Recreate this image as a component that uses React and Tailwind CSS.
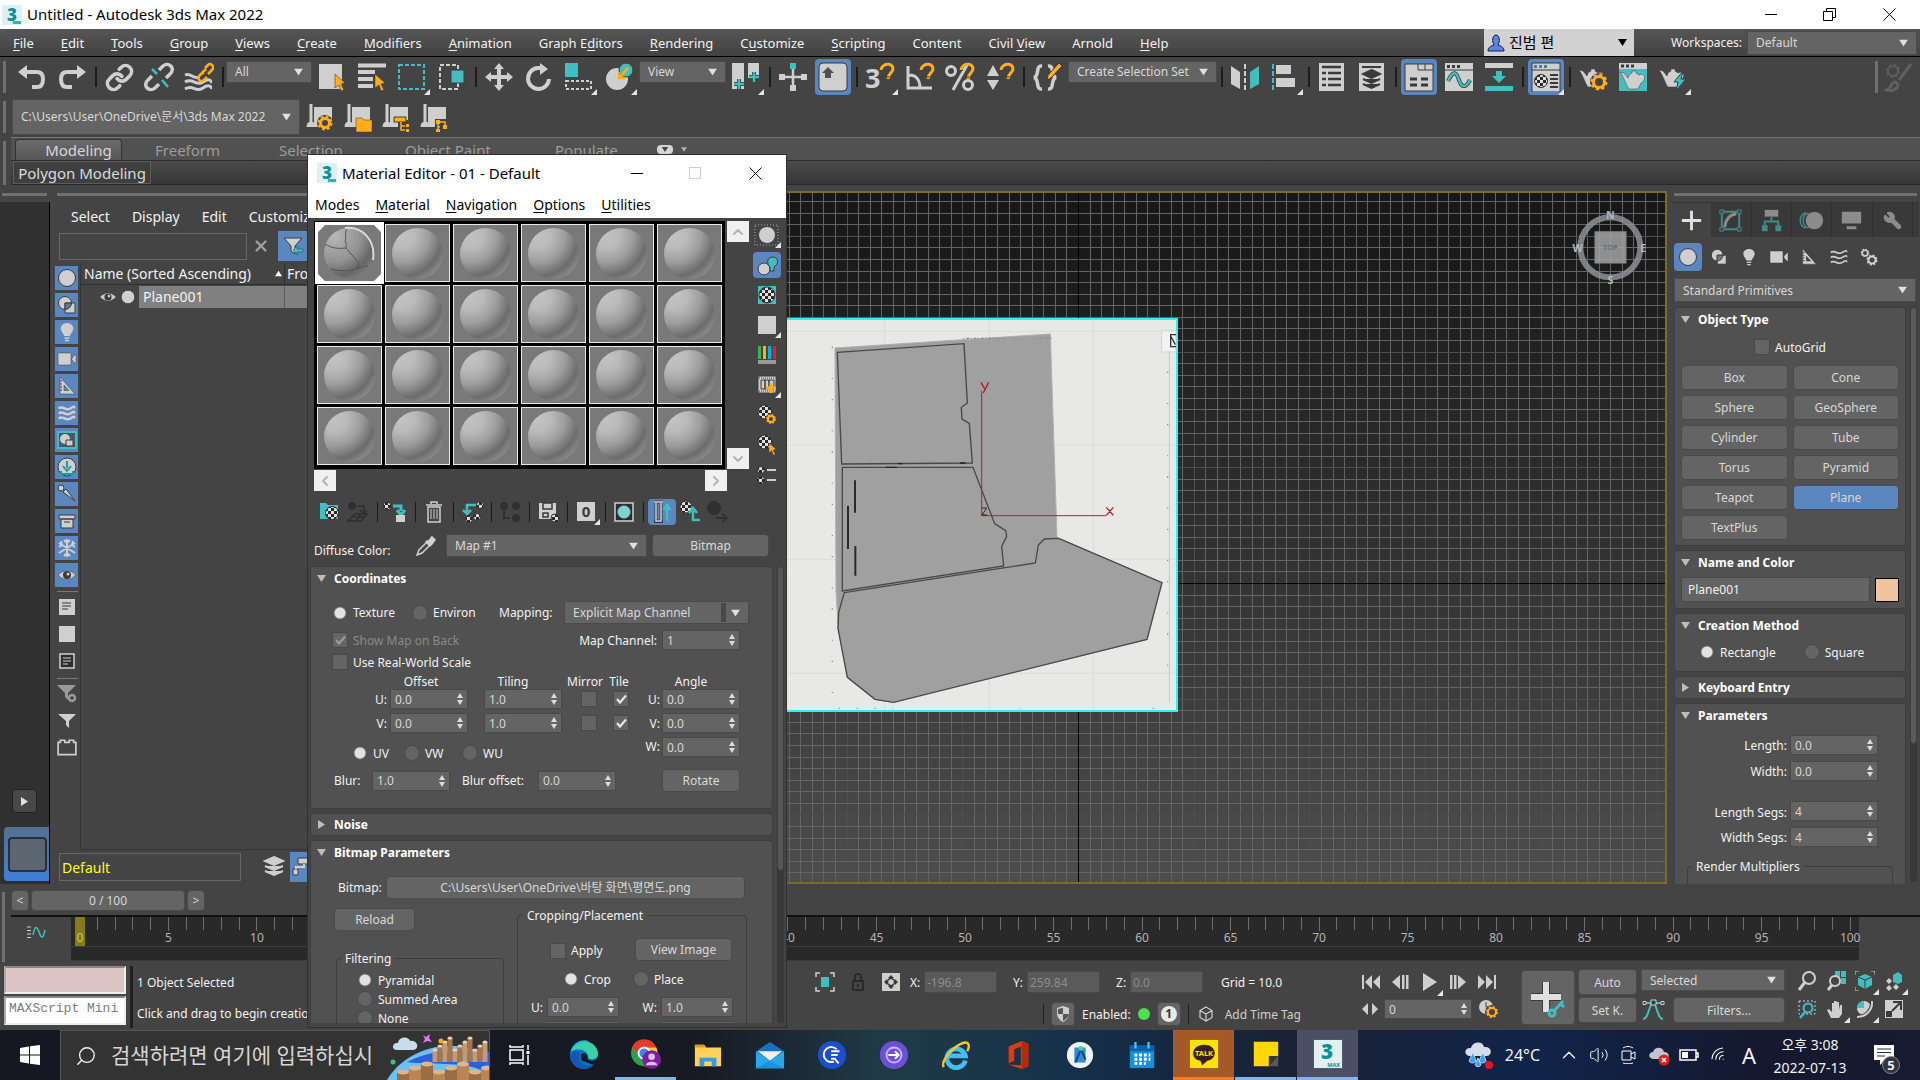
import React from "react";
import clsx from "clsx";
import { Link, ChevronUp, ChevronDown, ChevronLeft, ChevronRight, X, Wrench, Search, Volume2, Wifi } from "lucide-react";

const G = "#cfcfcf";
const T = "#41bfc0";
const A = "#ffae1a";
const D = "#3a3a3a";

// ---------- Small building blocks ----------

const Svg = ({ s = 30, vb, className = "", children }) => (
  <svg width={s} height={s} viewBox={vb || `0 0 ${s} ${s}`} className={clsx("shrink-0", className)} fill="none" aria-hidden="true">
    {children}
  </svg>
);

const Corner = () => (
  <svg width="6" height="6" viewBox="0 0 6 6" className="absolute right-0 bottom-0" aria-hidden="true">
    <path d="M6 0V6H0Z" fill="#e6e6e6" />
  </svg>
);

const Tool = ({ label, active, corner, children }) => (
  <button
    aria-label={label}
    className={clsx("relative w-9 h-9 mx-[2px] shrink-0 flex items-center justify-center rounded", active && "bg-[#5b87c0]")}
  >
    {children}
    {corner && <Corner />}
  </button>
);

const Sep = () => (
  <span className="w-[7px] shrink-0 flex justify-center">
    <span className="w-[2px] h-5 bg-[#1c1c1c]" />
  </span>
);

const Tri = ({ className = "" }) => (
  <svg width="9" height="7" viewBox="0 0 9 7" className={clsx("pointer-events-none", className)} aria-hidden="true">
    <path d="M0 0H9L4.5 7Z" fill="currentColor" />
  </svg>
);

const Select = ({ label, value, className = "", split }) => (
  <div className={clsx("relative shrink-0 bg-[#646464] border border-[#4a4a4a] text-[#d8d8d8]", className)}>
    <select aria-label={label} className="appearance-none block w-full h-full pl-2 pr-5 outline-none bg-transparent">
      <option>{value}</option>
    </select>
    {split && <span className="absolute right-[22px] top-px bottom-px w-[5px] bg-[#484848]" />}
    <Tri className="absolute right-2 top-1/2 -translate-y-1/2 text-[#e0e0e0]" />
  </div>
);

const Spin = ({ label, value, className = "w-[78px]", dim }) => (
  <div className={clsx("relative shrink-0 h-5 bg-[#646464] border border-[#494949]", className)}>
    <input aria-label={label} defaultValue={value} className={clsx("block w-full h-full px-1 bg-transparent outline-none text-[12px]", dim ? "text-[#8f8f8f]" : "text-[#d5d5d5]")} />
    <svg width="6" height="12" viewBox="0 0 6 12" className="absolute right-1 top-[3px]" aria-hidden="true">
      <path d="M3 0L6 5H0ZM3 12L6 7H0Z" fill="#dcdcdc" />
    </svg>
  </div>
);

const Radio = ({ name, children, checked, className = "" }) => (
  <label className={clsx("flex items-center gap-[5px] whitespace-nowrap", className)}>
    <input
      type="radio"
      name={name}
      defaultChecked={checked}
      className="appearance-none w-4 h-4 rounded-full bg-[#646464] border border-[#494949] checked:bg-[radial-gradient(circle,#e2e2e2_5px,#646464_6px)]"
    />
    {children}
  </label>
);

const Check = ({ children, label, checked, disabled, className = "" }) => (
  <label className={clsx("flex items-center gap-[5px] whitespace-nowrap", disabled && "text-[#8a8a8a]", className)}>
    <span className="relative block w-4 h-4">
      <input type="checkbox" aria-label={label} defaultChecked={checked} disabled={disabled} className="peer block appearance-none w-4 h-4 bg-[#646464] border border-[#494949]" />
      <svg width="16" height="16" viewBox="0 0 16 16" className="absolute inset-0 hidden peer-checked:block pointer-events-none" fill="none" aria-hidden="true">
        <path d="M4 8L7 11.500L13 4.500" stroke={disabled ? "#9a9a9a" : "#e4e4e4"} strokeWidth="2.200" />
      </svg>
    </span>
    {children}
  </label>
);

const Btn = ({ children, active, className = "" }) => (
  <button className={clsx("rounded border border-[#4a4a4a] text-[#d8d8d8] whitespace-nowrap", active ? "bg-[#5b87c0]" : "bg-[#646464]", className)}>
    {children}
  </button>
);

const Rollout = ({ title, closed, className = "", children }) => (
  <section className={clsx("rounded border border-[#3e3e3e] bg-[#515151] shrink-0", className)}>
    <h3 className={clsx("pl-[6px] pr-2 flex items-center font-bold text-white", closed ? "h-[21px]" : "h-[22px]")}>
      <svg width="9" height="9" viewBox="0 0 9 9" className="mr-2" aria-hidden="true">
        <path d={closed ? "M1 0V9L8 4.5Z" : "M0 1H9L4.5 8Z"} fill="#bdbdbd" />
      </svg>
      <span className="flex-1">{title}</span>
      <span className="w-2 h-2 bg-[radial-gradient(#9a9a9a_40%,transparent_50%)] bg-[length:2px_2px]" />
    </h3>
    {children}
  </section>
);

const Mnemonic = ({ text, at }) =>
  at < 0 ? (
    text
  ) : (
    <>
      {text.slice(0, at)}
      <span className="underline underline-offset-2">{text[at]}</span>
      {text.slice(at + 1)}
    </>
  );

const Logo = () => (
  <span className="relative w-5 h-5 shrink-0 flex items-center justify-center bg-[#dff0f0] text-[#0d9199] text-[17px] leading-5 font-black">
    3<span className="absolute right-px bottom-px w-2 h-[3px] bg-[#2fb3b3]" />
  </span>
);

const DotsH = ({ className = "" }) => (
  <span className={clsx("block h-[3px] bg-[radial-gradient(#9c9c9c_45%,transparent_55%)] bg-[length:2px_2px]", className)} />
);

const DotsV = ({ className = "" }) => (
  <span className={clsx("block w-[3px] bg-[radial-gradient(#9c9c9c_45%,transparent_55%)] bg-[length:2px_2px]", className)} />
);

// ---------- Shared icon drawings ----------

const Magnet = ({ x = 0 }) => (
  <g transform={`translate(${x} 0)`}>
    <path d="M14 8C15 1 26 0 26 7C26 11 21 11 21 17" stroke={A} strokeWidth="3" />
    <path d="M13 8.500H16M19.500 15H22.500" stroke={D} />
  </g>
);

const Teapot = () => (
  <path d="M1 8L5 9L9 14L10 11C11 10 13 9 13 9V7H17V9L20 11C24 9 27 12 25 16C24 18 23 19 22 19L19 25H10C7 21 6 15 1 8Z" fill={G} stroke={D} strokeWidth=".5" />
);

const Gear = ({ cx, cy, r = 6, w = 3, color = A }) => (
  <g>
    <circle cx={cx} cy={cy} r={r} stroke={color} strokeWidth={w} strokeDasharray={`${r * 0.42} ${r * 0.365}`} />
    <circle cx={cx} cy={cy} r={r - w / 2} stroke={color} strokeWidth={w} />
  </g>
);

const Wand = ({ x = 0, y = 0 }) => (
  <path transform={`translate(${x} ${y})`} d="M0 0L10 9L6 10L9 16L6 17L4 11L0 14Z" fill={A} stroke={D} strokeWidth=".6" />
);

const Waves = ({ color = G, w = 2.5 }) => (
  <path d="M2 5C8 1 10 9 16 5S20 4 22 4M2 11C8 7 10 15 16 11S20 10 22 10M2 17C8 13 10 21 16 17S20 16 22 16" stroke={color} strokeWidth={w} />
);

const Chk = ({ cx, cy, r }) => <circle cx={cx} cy={cy} r={r} fill="url(#chk)" stroke="#333" />;

const Eye = ({ s = 20 }) => (
  <Svg s={s} vb="0 0 20 20">
    <path d="M1 10Q10 1 19 10Q10 19 1 10Z" fill={G} stroke={D} strokeWidth=".5" />
    <circle cx="10" cy="10" r="4" fill={D} />
    <circle cx="11" cy="9" r="1.500" fill={G} />
  </Svg>
);

const Bulb = ({ s = 20 }) => (
  <Svg s={s} vb="0 0 20 20">
    <path d="M10 1C5 1 3 5 4 8C5 11 7 12 7 14H13C13 12 15 11 16 8C17 5 15 1 10 1Z" fill={G} />
    <path d="M7.500 16H12.500M8 18.500H12" stroke={G} strokeWidth="1.500" />
  </Svg>
);

const Cam = ({ s = 20 }) => (
  <Svg s={s} vb="0 0 20 20">
    <path d="M1 4H14V16H1ZM15 9L19 5V15L15 11Z" fill={G} stroke={D} strokeWidth=".5" />
  </Svg>
);

const Helper = ({ s = 20 }) => (
  <Svg s={s} vb="0 0 20 20">
    <path d="M3 1L18 18H3ZM7 9V14.500H12Z" fill={G} fillRule="evenodd" stroke={D} strokeWidth=".5" />
    <path d="M3 5H5M3 8H5M3 11H5M3 14H5" stroke={D} />
  </Svg>
);

const Shapes = ({ s = 20 }) => (
  <Svg s={s} vb="0 0 20 20">
    <circle cx="8" cy="8" r="6.500" fill={G} stroke={D} />
    <path d="M8 8H18V18H8Z" fill={G} stroke={D} />
    <path d="M8 14.500V8H14.500A6.500 6.500 0 0 1 8 14.500Z" fill="#6b7684" stroke={D} />
  </Svg>
);

const Ball = ({ s = 20 }) => (
  <Svg s={s} vb="0 0 20 20">
    <circle cx="10" cy="10" r="8.500" fill={G} stroke={D} />
  </Svg>
);

// ---------- Title, menus and toolbars ----------

const MENUS = [
  ["File", 0], ["Edit", 0], ["Tools", 0], ["Group", 0], ["Views", 0], ["Create", 0], ["Modifiers", 0], ["Animation", 0],
  ["Graph Editors", 7], ["Rendering", 0], ["Customize", 1], ["Scripting", 0], ["Content", -1], ["Civil View", 6], ["Arnold", -1], ["Help", 0],
];

const TitleBar = () => (
  <header className="h-[29px] shrink-0 bg-white text-black flex items-center pl-[2px]">
    <Logo />
    <h1 className="ml-[5px] flex-1 text-[15px]">Untitled - Autodesk 3ds Max 2022</h1>
    <button aria-label="Minimize" className="w-[58px] flex justify-center"><span className="w-3 h-px bg-black" /></button>
    <button aria-label="Restore" className="w-[58px] flex justify-center">
      <Svg s={13}><path d="M.5 3.500H9.500V12.500H.5ZM3.500 3V.5H12.500V9.500H10" stroke="#000" /></Svg>
    </button>
    <button aria-label="Close" className="w-[62px] flex justify-center">
      <Svg s={13}><path d="M.5 .5L12.500 12.500M12.500 .5L.5 12.500" stroke="#000" /></Svg>
    </button>
  </header>
);

const MenuBar = () => (
  <nav className="h-7 shrink-0 flex items-center border-b border-black bg-linear-to-b from-[#565656] to-[#424242]">
    <div className="flex-1 flex gap-[27px] pl-[13px] text-[13px] leading-5">
      {MENUS.map(([text, at]) => (
        <button key={text} className="whitespace-nowrap"><Mnemonic text={text} at={at} /></button>
      ))}
    </div>
    <button className="w-[150px] h-full bg-[#d2d2d2] text-black flex items-center px-[3px] text-[15px]">
      <Svg s={18}>
        <path d="M9 1C5 1 5 8 7 11C3 12 1 14 1 17H17C17 14 15 12 11 11C13 8 13 1 9 1Z" fill="#5b82e0" stroke="#16204a" />
      </Svg>
      <span className="ml-1 flex-1 text-left">진범 편</span>
      <Tri className="mr-1" />
    </button>
    <span className="w-[108px] text-right text-[12px]">Workspaces:</span>
    <Select label="Workspaces" value="Default" className="ml-[5px] mr-[3px] w-[170px] h-6 text-[12px]" />
  </nav>
);

const MainToolbar = () => (
  <div className="h-10 shrink-0 flex items-center pl-[3px]">
    <DotsV className="h-8 mr-[6px]" />
    <Tool label="Undo"><Svg><path d="M10 3V17L1 10Z" fill={G} /><path d="M9 10H20Q26 10 26 17Q26 25 20 25H15" stroke={G} strokeWidth="4" /></Svg></Tool>
    <Tool label="Redo"><Svg><path d="M20 3V17L29 10Z" fill={G} /><path d="M21 10H10Q4 10 4 17Q4 25 10 25H15" stroke={G} strokeWidth="4" /></Svg></Tool>
    <Sep />
    <Tool label="Link"><Link size={29} strokeWidth={3} color={G} /></Tool>
    <Tool label="Unlink">
      <Svg>
        <path d="M15 8L19 4C25 -1 32 7 26 12L22 16M15 22L11 26C5 31 -2 23 4 18L8 14" stroke={G} strokeWidth="3.500" />
        <path d="M8 7L13 12M18 18L24 25" stroke={T} strokeWidth="2.500" />
      </Svg>
    </Tool>
    <Tool label="Bind to space warp">
      <Svg>
        <path d="M1 13C7 10 9 18 15 15M1 20C9 15 12 25 19 20S27 20 28 20M1 27C9 22 12 31 19 26S27 26 28 26" stroke={G} strokeWidth="3" />
        <path d="M21 6L24 3C27 0 31 5 28 8L24 12M22 7L17 12M20 10L16 13C12 17 17 21 20 18L23 15" stroke={A} strokeWidth="2.500" />
      </Svg>
    </Tool>
    <Sep />
    <Select label="Selection filter" value="All" className="w-[86px] h-[22px] self-start mt-1 text-[12px] leading-5" />
    <Tool label="Select object"><Svg><path d="M2 2H25V27H2Z" fill={G} /><Wand x={18} y={12} /></Svg></Tool>
    <Tool label="Select by name"><Svg><path d="M1 3.500H29M1 10H18M1 17H16M1 24H16" stroke={G} strokeWidth="4" /><Wand x={18} y={12} /></Svg></Tool>
    <Tool label="Selection region" corner><Svg><path d="M2 3H27V27H2Z" stroke={T} strokeWidth="2" strokeDasharray="4 2" /></Svg></Tool>
    <Tool label="Window crossing"><Svg><path d="M3 3H21V27H3Z" stroke={G} strokeWidth="2" strokeDasharray="4 2" /><path d="M14 8H27V21H14Z" fill={T} stroke={D} /></Svg></Tool>
    <Sep />
    <Tool label="Move">
      <Svg><path d="M15 1L20 7H17V13H23V10L29 15L23 20V17H17V23H20L15 29L10 23H13V17H7V20L1 15L7 10V13H13V7H10Z" fill={G} /></Svg>
    </Tool>
    <Tool label="Rotate"><Svg><path d="M18 6H14A10.500 10.500 0 1 0 25 17" stroke={G} strokeWidth="4" /><path d="M16 1V13L24 7Z" fill={G} /></Svg></Tool>
    <Tool label="Scale" corner><Svg><path d="M1 1H14V15H1Z" fill={T} /><path d="M2 19H27V27H2Z" stroke={G} strokeWidth="2" strokeDasharray="3 2" /></Svg></Tool>
    <Tool label="Place" corner>
      <Svg><circle cx="13" cy="17" r="11" fill={G} /><circle cx="22" cy="8" r="7" fill={T} stroke={D} /><path d="M24 6L16 15M15 10V16H21" stroke={A} strokeWidth="2.500" /></Svg>
    </Tool>
    <Select label="Reference coordinate system" value="View" className="w-[87px] h-[22px] self-start mt-1 text-[12px] leading-5" />
    <Tool label="Pivot center" corner>
      <Svg><path d="M1 1H13V27H1ZM17 1H28V16H17Z" fill={G} /><path d="M8 17V27M3 22H13M23 10V20M18 15H28" stroke={D} strokeWidth="4" /><path d="M8 17V27M3 22H13M23 10V20M18 15H28" stroke={T} strokeWidth="2.500" /></Svg>
    </Tool>
    <Sep />
    <Tool label="Manipulate"><Svg><path d="M15 4V26M4 15H26" stroke={G} strokeWidth="2.500" /><path d="M1 12H7V18H1ZM23 12H29V18H23ZM12 23H18V29H12Z" fill={G} /><path d="M12 1H18V7H12Z" fill={T} /></Svg></Tool>
    <Tool label="Keyboard override" active><Svg><rect x="1" y="1" width="28" height="28" rx="4" fill={G} stroke={D} /><path d="M10 5L16 11H13V16H7V11H4Z" fill="#505050" /></Svg></Tool>
    <Sep />
    <Tool label="Snaps toggle" corner><Svg><text x="0" y="26" fontSize="27" fontWeight="700" fill={G}>3</text><Magnet x={2} /></Svg></Tool>
    <Tool label="Angle snap"><Svg><path d="M3 4V26H27M4 13C12 13 15 19 15 26" stroke={G} strokeWidth="3" /><Magnet x={2} /></Svg></Tool>
    <Tool label="Percent snap"><Svg><path d="M22 3L8 28" stroke={G} strokeWidth="3" /><circle cx="6" cy="9" r="4.500" stroke={G} strokeWidth="3" /><circle cx="23" cy="23" r="4.500" stroke={G} strokeWidth="3" /><Magnet x={2} /></Svg></Tool>
    <Tool label="Spinner snap"><Svg><path d="M8 3L14 14H2ZM8 28L14 18H2Z" fill={G} /><Magnet x={2} /></Svg></Tool>
    <Sep />
    <Tool label="Edit named selection sets"><Svg><path d="M10 4C3 3 8 14 2 15.500C8 17 3 28 10 27M16 4C23 3 18 14 24 15.500C18 17 23 28 16 27" stroke={G} strokeWidth="3.500" /><path d="M27 1L30 4L19 16L15 18L16 13Z" fill={A} stroke={D} /></Svg></Tool>
    <Select label="Named selection sets" value="Create Selection Set" className="mx-px w-[149px] h-[22px] self-start mt-1 text-[12px] leading-5" />
    <Sep />
    <Tool label="Mirror"><Svg><path d="M1 4L10 10V27L1 22Z" fill={G} /><path d="M29 4L20 10V27L29 22Z" fill={T} /><path d="M15 2V30" stroke={G} strokeWidth="2" strokeDasharray="5 2" /></Svg></Tool>
    <Tool label="Align" corner><Svg><path d="M3 2V29" stroke={T} strokeWidth="2" strokeDasharray="5 2" /><path d="M6 3H21V12H6ZM6 16H25V25H6Z" fill={G} /></Svg></Tool>
    <Sep />
    <Tool label="Scene explorer"><Svg><path d="M2 1H27V29H2Z" fill={G} /><path d="M5 5H24M5 11H9M11 11H24M5 17H9M11 17H24M5 23H9M11 23H24" stroke={D} strokeWidth="2.500" /></Svg></Tool>
    <Tool label="Layer explorer"><Svg><path d="M2 1H27V29H2Z" fill={G} /><path d="M5 5H24" stroke={D} strokeWidth="2" /><path d="M14.500 8L23 12L14.500 16L6 12ZM6 17L14.500 21L23 17M6 22L14.500 26L23 22" fill={D} stroke={D} strokeWidth="2" /></Svg></Tool>
    <Sep />
    <Tool label="Toggle ribbon" active><Svg><path d="M1 2H29V29H1Z" fill={G} stroke={D} /><path d="M14 2V8H29M21 2V8" stroke={D} /><path d="M6 17H13M17 17H24M6 23H13M17 23H24" stroke={D} strokeWidth="3" /></Svg></Tool>
    <Tool label="Curve editor"><Svg><path d="M1 1H29V29H1Z" fill={G} /><path d="M1 8H29" stroke={D} /><path d="M3 4.500H6M8 4.500H11M13 4.500H16" stroke={D} strokeWidth="3" /><path d="M4 19C10 6 13 12 15 18S21 28 26 18" stroke={D} strokeWidth="4" /><path d="M4 19C10 6 13 12 15 18S21 28 26 18" stroke={T} strokeWidth="2.500" /></Svg></Tool>
    <Tool label="Schematic view"><Svg><path d="M1 1H29V6H1Z" fill={G} /><path d="M1 24H29V29H1Z" fill={T} /><path d="M12 9H18V14H22L15 21L8 14H12Z" fill={T} /></Svg></Tool>
    <Sep />
    <Tool label="Material editor" active corner>
      <Svg><path d="M1 1H29V30H1Z" fill={G} stroke={D} /><path d="M1 8H29" stroke={D} /><path d="M3 4.500H6M8 4.500H11M13 4.500H16" stroke="#4a78b8" strokeWidth="3" /><Chk cx={10} cy={19} r={6.5} /><path d="M19 13H27M19 17H27M19 21H27M19 25H27" stroke={D} strokeWidth="2" /></Svg>
    </Tool>
    <Sep />
    <Tool label="Render setup"><Svg><Teapot /><circle cx="21" cy="20" r="9" fill="#444" /><Gear cx={21} cy={20} r={7} /></Svg></Tool>
    <Tool label="Rendered frame"><Svg><path d="M1 1H29V29H1Z" fill={T} /><path d="M1 1H29V7H1Z" fill={G} /><path d="M3 4H6M8 4H11M13 4H16" stroke={D} strokeWidth="3" /><g transform="translate(1 2)"><Teapot /></g></Svg></Tool>
    <Tool label="Render" corner><Svg><Teapot /><path d="M25 9L16 20H20L18 29L28 17H23Z" fill={T} stroke={D} /></Svg></Tool>
    <div className="flex-1" />
    <DotsV className="h-8 mr-[6px]" />
    <Svg className="mr-[6px]"><Gear cx={9} cy={9} r={6} w={2} color="#5c5c5c" /><path d="M27 2L15 18M11 20C7 20 8 26 3 28C10 30 14 26 14 22Z" stroke="#606060" strokeWidth="3" /></Svg>
  </div>
);

const Scroll = ({ children }) => (
  <Svg>
    <path d="M5 2V25M2 25C2 20 8 20 8 25" stroke={G} strokeWidth="3" />
    <path d="M8 5H26V25H8Z" fill={G} />
    {children}
  </Svg>
);

const ProjectBar = () => (
  <div className="h-10 shrink-0 flex items-center pl-[3px]">
    <DotsV className="h-8 mr-[6px]" />
    <Select label="Project folder" value="C:\Users\User\OneDrive\문서\3ds Max 2022" className="w-[288px] h-9 mr-[2px] text-[12px]" />
    <button aria-label="Project settings" className="w-[38px] flex justify-center"><Scroll><circle cx="19" cy="21" r="8" fill="#444" /><Gear cx={19} cy={21} r={6} /></Scroll></button>
    <button aria-label="Project folder" className="w-[38px] flex justify-center"><Scroll><path d="M12 16H18L20 18H28V30H12Z" fill={A} stroke={D} strokeWidth=".5" /></Scroll></button>
    <button aria-label="Project hierarchy" className="w-[38px] flex justify-center"><Scroll><path d="M16 18H28V30H16Z" fill="#444" /><path d="M12 15H24V20H12Z" fill={A} stroke={D} /><path d="M19 20V28H23M19 24H23" stroke={A} strokeWidth="1.500" /><path d="M24 22H27V25H24ZM24 27H27V30H24Z" fill={A} /></Scroll></button>
    <button aria-label="Project structure" className="w-[38px] flex justify-center"><Scroll><path d="M15 17H28V30H15Z" fill="#444" /><path d="M18 30V20H25V24M18 25H20" stroke={A} strokeWidth="1.500" /><path d="M16 18H20V22H16ZM23 23H27V27H23ZM16 27H20V30H16Z" fill={A} /></Scroll></button>
  </div>
);

const Ribbon = () => (
  <div className="shrink-0 flex pl-[3px]">
    <DotsV className="mt-1 h-11 mr-[5px]" />
    <div className="flex-1 border-t border-[#747474]">
      <div className="h-[23px] flex items-end bg-[#515151] border-b border-[#2c2c2c] text-[15px] leading-5 text-[#9c9c9c]">
        <button className="ml-1 mr-[33px] w-[107px] pl-5 rounded-t bg-linear-to-b from-[#6c6c6c] to-[#565656] border border-b-0 border-[#333] text-[#d6d6d6]">Modeling</button>
        <button className="w-[124px] text-left">Freeform</button>
        <button className="w-[126px] text-left">Selection</button>
        <button className="w-[150px] text-left">Object Paint</button>
        <button className="w-[102px] text-left">Populate</button>
        <button aria-label="Ribbon display" className="self-center w-4 h-[9px] rounded-sm bg-[#d6d6d6] flex items-center justify-center text-[#444]"><Tri className="w-2 h-[5px]" /></button>
        <Tri className="self-center ml-2 w-[6px] text-[#b0b0b0]" />
      </div>
      <div className="h-6 flex bg-linear-to-b from-[#4a4a4a] to-[#363636] border-b border-[#2a2a2a]">
        <button className="ml-[2px] w-[138px] border border-[#5c5c5c] bg-[#3f3f3f] text-[15px] leading-5 text-[#dadada]">Polygon Modeling</button>
      </div>
    </div>
  </div>
);

// ---------- Scene explorer ----------

const FILTERS = [
  ["Geometry", <Ball />],
  ["Shapes", <Shapes />],
  ["Lights", <Bulb />],
  ["Cameras", <Cam />],
  ["Helpers", <Helper />],
  ["Space warps", <Svg s={20} vb="0 0 24 21"><Waves w={3} /></Svg>],
  ["Groups", <Svg s={20}><path d="M1 2H19V18H1Z" fill="#4a5a6e" stroke={T} strokeWidth="2" /><circle cx="8" cy="9" r="5" fill={G} /><path d="M9 10H16V16H9Z" fill={G} stroke={D} /></Svg>],
  ["Xrefs", <Svg s={20}><circle cx="10" cy="10" r="9" fill={G} stroke={D} /><path d="M10 4V11M6 9L10 14L14 9M4 14V17H16V14" stroke="#1f9c9c" strokeWidth="2" /></Svg>],
  ["Bones", <Svg s={20}><circle cx="4" cy="4" r="3" fill={G} stroke={D} /><path d="M6 8L9 5L18 17Z" fill={G} stroke={D} /></Svg>],
  ["Containers", <Svg s={20}><path d="M2 4H18V8H2ZM4 8H16V17H4Z" fill={G} stroke={D} /><path d="M7 11H13" stroke={D} /></Svg>],
  ["Frozen", <Svg s={20}><path d="M10 1V19M2 5L18 15M18 5L2 15M7 2L10 5L13 2M7 18L10 15L13 18M2 9L5 7L4 3M18 9L15 7L16 3" stroke={G} strokeWidth="2" /></Svg>],
  ["Hidden", <Eye />],
];

const SceneExplorer = () => (
  <aside className="w-[258px] shrink-0 flex flex-col overflow-hidden">
    <DotsH className="ml-[7px] mt-[2px]" />
    <div className="flex pl-[21px] mt-[11px] h-5 gap-[22px] text-[14px] leading-5">
      {["Select", "Display", "Edit", "Customize"].map((m) => (
        <button key={m}>{m}</button>
      ))}
    </div>
    <div className="flex items-center pl-[9px] mt-1 h-[30px] shrink-0">
      <input aria-label="Find" className="w-[188px] h-[27px] bg-transparent border border-[#666] outline-none px-1" />
      <X size={18} strokeWidth={3} className="ml-[5px] mr-2 text-[#a0a0a0]" />
      <button aria-label="Filter" className="w-[30px] h-[30px] shrink-0 bg-[#5b87c0] flex items-center justify-center">
        <Svg s={22}><path d="M2 3H20L13 11V19L9 16V11Z" fill={G} stroke={D} /><path d="M11 15L15 11V14H21V17H15V20Z" fill={T} stroke={D} strokeWidth=".5" /></Svg>
      </button>
    </div>
    <div className="flex flex-1 min-h-0 mt-[2px]">
      <div className="w-[25px] ml-[5px] flex flex-col gap-[3px] pt-[3px] shrink-0">
        {FILTERS.map(([name, icon]) => (
          <button key={name} aria-label={name} className="w-[23px] h-6 bg-[#5b87c0] flex items-center justify-center">{icon}</button>
        ))}
        <span className="mx-[2px] mt-px h-px bg-[#7a7a7a]" />
        <button aria-label="All" className="w-[23px] h-6 flex items-center justify-center"><Svg s={16}><path d="M0 0H16V16H0Z" fill={G} /><path d="M3 4H12M3 7H12M3 10H9" stroke={D} /></Svg></button>
        <button aria-label="None" className="w-[23px] h-6 flex items-center justify-center"><Svg s={16}><path d="M0 0H16V16H0Z" fill={G} /></Svg></button>
        <button aria-label="Invert" className="w-[23px] h-6 flex items-center justify-center"><Svg s={16}><path d="M1 1H15V15H1Z" fill="#2e2e2e" stroke={G} strokeWidth="1.500" /><path d="M4 5H12M4 8H12M4 11H9" stroke={G} /></Svg></button>
        <span className="mx-[2px] mt-[2px] h-px bg-[#7a7a7a]" />
        <button aria-label="Filter settings" className="w-[23px] h-6 flex items-center justify-center"><Svg s={20}><path d="M0 1H19L11 9V16L8 13V9Z" fill="#999" /><circle cx="15" cy="14" r="3" fill="#444" stroke="#999" strokeWidth="2.500" /></Svg></button>
        <button aria-label="Filters" className="w-[23px] h-6 flex items-center justify-center"><Svg s={18}><path d="M0 2H18L11 9V16L8 13V9Z" fill={G} /></Svg></button>
        <button aria-label="Containers" className="w-[23px] h-6 flex items-center justify-center"><Svg s={20} vb="0 0 18 18"><path d="M1 4H3V2H7V4H11V2H15V4H17V15H1Z" stroke={G} strokeWidth="1.500" /></Svg></button>
      </div>
      <table className="flex-1 self-stretch block border-l border-b border-[#353535] overflow-hidden text-[14px]">
        <thead className="block">
          <tr className="flex h-[22px] border-b border-[#2f2f2f] leading-[22px] whitespace-nowrap">
            <th className="w-[204px] shrink-0 pl-[3px] font-normal text-left flex items-center border-r border-[#2f2f2f]">
              <span className="flex-1">Name (Sorted Ascending)</span>
              <Tri className="rotate-180 mr-[2px] text-white w-[7px]" />
            </th>
            <th className="pl-[2px] font-normal">Frozen</th>
          </tr>
        </thead>
        <tbody className="block">
          <tr className="flex h-6 leading-[22px]">
            <td className="w-[58px] shrink-0 flex items-center pl-[18px] gap-[3px]"><Eye s={18} /><Ball s={16} /></td>
            <td className="w-[146px] shrink-0 bg-[#808080] border-r border-[#5c5c5c] pl-1 h-[22px] mt-px">Plane001</td>
            <td className="w-8 bg-[#808080] h-[22px] mt-px" />
          </tr>
        </tbody>
      </table>
    </div>
    <div className="h-[34px] shrink-0 flex items-center pl-[9px]">
      <input aria-label="Layer" defaultValue="Default" className="w-[182px] h-7 px-[2px] bg-transparent border border-[#666] text-[14px] text-[#ffff14] outline-none" />
      <Tri className="ml-1 w-[6px] text-black" />
      <span className="w-px h-7 ml-[8px] mr-1 bg-[#808080]" />
      <Svg s={28} className="ml-[3px]" vb="0 0 28 28"><path d="M14 4L23 8L14 12L5 8ZM5 13L14 17L23 13M5 18L14 22L23 18" fill={G} stroke={G} strokeWidth="2" /></Svg>
      <button aria-label="Hierarchy" className="ml-[2px] w-[30px] h-[30px] shrink-0 bg-[#5b87c0] flex items-center"><Svg s={24}><path d="M8 3H20V9H8ZM3 14H8V20H3Z" fill={G} stroke={D} /><path d="M14 9V12H6V14" stroke={G} strokeWidth="2" /></Svg></button>
    </div>
  </aside>
);

// ---------- Viewport ----------

const STEP = 11.57;
const range = (from, to) => Array.from({ length: to - from + 1 }, (_, i) => from + i);

const Viewport = () => (
  <main className="relative flex-1 min-w-0 border-2 border-l-0 border-[#7d6a26] bg-linear-to-b from-[#161616] to-[#4d4d4d]">
    <svg className="absolute inset-0 w-full h-full" viewBox="308 193 1357 689" preserveAspectRatio="xMaxYMid slice" fill="none" role="img" aria-label="Top view">
      <g shapeRendering="crispEdges">
        {range(-66, 50).map((i) => (
          <path key={`v${i}`} d={`M${1078.5 + i * STEP} 193V882`} stroke={i % 10 === 0 ? "#4e4e4e" : "#646464"} />
        ))}
        {range(-33, 25).map((i) => (
          <path key={`h${i}`} d={`M308 ${583.5 + i * STEP}H1665`} stroke={i % 10 === 0 ? "#4e4e4e" : "#646464"} />
        ))}
        <path d="M1078.5 193V882M308 583.5H1665" stroke="#000" />
      </g>
      {/* textured plane */}
      <g transform="translate(780 300) scale(.33333)">
        <path d="M18 57H1191V1233H18Z" fill="#e8e8e6" stroke="#25f5f5" strokeWidth="6" />
        <path d="M314 60V1230M628 60V1230M940 60V1230M20 94H1188M20 436H1188M20 778H1188M20 1120H1188" stroke="#dcdcdc" strokeWidth="3" />
        <path d="M1168 150V1208" stroke="#c9c9c9" strokeWidth="3" />
        <path d="M165 144L811 102L831 712L1146 848L1101 1018L341 1207L285 1198L202 1132L174 985L168 870Z" fill="#a0a0a0" stroke="#b0b0b0" strokeWidth="3" />
        <path
          d="M172 157L552 131L562 309L544 322L546 357L568 370L577 489L185 492ZM187 502H579L644 671L677 692L680 709L665 739L671 798L187 873ZM193 878L766 789L775 735L793 717L836 715L1146 848L1101 1018L341 1207L285 1198L202 1132L174 985L176 937Z"
          stroke="#484848" strokeWidth="4"
        />
        <path d="M225 541V638M204 617V747M226 738V827" stroke="#2a2a2a" strokeWidth="6" />
        <path d="M318 502H350M354 491H368M540 489H556" stroke="#222" strokeWidth="4" />
        <path d="M157 140V1205M1163 215V1120" stroke="#8c8c8c" strokeWidth="4" strokeDasharray="4 90 3 60" />
        <path d="M550 115H680M768 115H818" stroke="#8c8c8c" strokeWidth="4" strokeDasharray="3 6 8 5" />
        <path d="M176 1225H340M720 1225H722M1118 1225H1128" stroke="#9c9c9c" strokeWidth="4" strokeDasharray="4 50" />
        <path d="M1145 92H1188V156H1145Z" fill="#f2f2f2" stroke="#d2d2d2" strokeWidth="3" />
        <path d="M1188 104H1172V140H1188M1172 108L1186 134" stroke="#333" strokeWidth="4" />
        <path d="M605 272V647H978" stroke="#c81c1c" strokeWidth="3" />
        <path d="M603 247L615 268M626 247L610 279M979 622L1000 646M1000 622L979 646" stroke="#b02020" strokeWidth="4" />
        <path d="M605 624H620L606 645H621" stroke="#222" strokeWidth="3" />
      </g>
      {/* view cube */}
      <g transform="translate(1560 180) scale(.33333)">
        <circle cx="151" cy="202" r="90" stroke="#8d9196" strokeOpacity=".85" strokeWidth="18" />
        <path d="M106 156H197V248H106Z" fill="#a2a3a4" fillOpacity=".85" stroke="#8d8d8d" strokeWidth="5" />
        <g fontSize="32" fontWeight="700" textAnchor="middle" fill="#b5b8bc">
          <text x="151" y="117">N</text><text x="151" y="312">S</text><text x="53" y="215">W</text><text x="250" y="215">E</text>
          <text x="151" y="210" fontSize="22" fill="#6c6e70">TOP</text>
        </g>
      </g>
    </svg>
  </main>
);

// ---------- Command panel ----------

const PRIMITIVES = ["Box", "Cone", "Sphere", "GeoSphere", "Cylinder", "Tube", "Torus", "Pyramid", "Teapot", "Plane", "TextPlus"];

const TABS = [
  ["Create", <path d="M15 5V25M5 15H25" stroke="#e0e0e0" strokeWidth="3" />],
  ["Modify", <><path d="M6 6H24V24H6Z" stroke="#3f8a8a" strokeWidth="2" /><path d="M9 22C10 14 14 9 21 8" stroke="#8c8c8c" strokeWidth="3" /><path d="M4 4H8V8H4ZM22 4H26V8H22ZM4 22H8V26H4ZM22 22H26V26H22Z" fill="#444" stroke="#3f8a8a" /></>],
  ["Hierarchy", <><path d="M8 4H22V11H8Z" fill="#8c8c8c" /><path d="M15 11V16M8 20V16H22V20" stroke="#3f8a8a" strokeWidth="2" /><path d="M5 20H11V26H5ZM19 20H25V26H19Z" fill="#3f8a8a" /></>],
  ["Motion", <><path d="M12 7A8.500 8.500 0 0 0 12 23M9 7A8.500 8.500 0 0 0 9 23" stroke="#3f8a8a" strokeWidth="1.500" /><circle cx="18" cy="15" r="9" fill="#8c8c8c" /></>],
  ["Display", <path d="M5 6H25V18H5ZM10 21H20V24H10Z" fill="#8c8c8c" />],
];

const CREATE_KINDS = [
  ["Shapes", <Shapes s={18} />],
  ["Lights", <Bulb s={18} />],
  ["Cameras", <Cam />],
  ["Helpers", <Helper s={18} />],
  ["Space warps", <Svg s={20} vb="0 0 24 21"><Waves w={2} /></Svg>],
  ["Systems", <Svg s={20}><Gear cx={6} cy={6} r={3.5} w={1.5} color={G} /><Gear cx={13} cy={13} r={4.5} w={2} color={G} /></Svg>],
];

const CommandPanel = () => (
  <aside className="w-[253px] shrink-0 flex flex-col pl-[5px] pr-px overflow-hidden text-[12px] leading-[15px]">
    <DotsH className="mt-[2px] mx-[2px]" />
    <div className="mt-[6px] h-[35px] shrink-0 flex bg-[#393939] border-t border-[#333]">
      {TABS.map(([name, icon], i) => (
        <button key={name} aria-label={name} className={clsx("flex-1 flex items-center justify-center", i === 0 ? "bg-[#444]" : "border-r border-[#2f2f2f]")}>
          <Svg s={29} vb="0 0 30 30">{icon}</Svg>
        </button>
      ))}
      <button aria-label="Utilities" className="flex-1 flex items-center justify-center border-r border-[#2f2f2f]"><Wrench size={19} className="-scale-x-100" color="#8c8c8c" fill="#8c8c8c" /></button>
      <span className="w-[6px]" />
    </div>
    <div className="mt-[6px] h-7 shrink-0 flex pl-[2px]">
      <button aria-label="Geometry" className="w-7 mr-[2px] rounded bg-[#5b87c0] flex items-center justify-center"><Ball /></button>
      {CREATE_KINDS.map(([n, icon]) => (
        <button key={n} aria-label={n} className="w-[30px] flex items-center justify-center">{icon}</button>
      ))}
    </div>
    <Select label="Category" value="Standard Primitives" className="mt-[7px] ml-[2px] mr-[3px] h-6 text-[12px]" />
    <div className="flex-1 min-h-0 mt-[5px] ml-[2px] mr-[2px] flex gap-1">
      <div className="flex-1 min-w-0 flex flex-col gap-1 overflow-hidden">
        <Rollout title="Object Type" className="h-[239px]">
          <Check className="w-fit mx-auto mt-[9px]">AutoGrid</Check>
          <div className="grid grid-cols-2 gap-[5px] px-[6px] mt-[10px]">
            {PRIMITIVES.map((p) => (
              <Btn key={p} active={p === "Plane"} className="h-[25px]">{p}</Btn>
            ))}
          </div>
        </Rollout>
        <Rollout title="Name and Color" className="h-[59px]">
          <div className="flex items-center gap-[5px] px-[6px] pt-1">
            <input aria-label="Object name" defaultValue="Plane001" className="flex-1 min-w-0 h-[25px] px-[6px] bg-[#646464] border border-[#494949] outline-none" />
            <button aria-label="Object color" className="w-6 h-6 bg-[#f0c49c] border border-black" />
          </div>
        </Rollout>
        <Rollout title="Creation Method" className="h-[59px]">
          <div className="flex pl-6 pt-2 gap-[28px]">
            <Radio name="method" checked>Rectangle</Radio>
            <Radio name="method">Square</Radio>
          </div>
        </Rollout>
        <Rollout title="Keyboard Entry" closed />
        <Rollout title="Parameters">
          <div className="grid grid-cols-[112px_88px] gap-x-[3px] gap-y-[6px] pt-[9px] text-right">
            <span className="self-center">Length:</span><Spin label="Length" value="0.0" className="w-full" />
            <span className="self-center">Width:</span><Spin label="Width" value="0.0" className="w-full" />
            <span className="self-center pt-4">Length Segs:</span><div className="pt-[14px]"><Spin label="Length Segs" value="4" className="w-full text-left" /></div>
            <span className="self-center">Width Segs:</span><Spin label="Width Segs" value="4" className="w-full" />
          </div>
          <fieldset className="mx-3 mt-3 h-20 rounded border border-[#3c3c3c] pl-1"><legend className="px-1">Render Multipliers</legend></fieldset>
        </Rollout>
      </div>
      <div className="w-[7px] bg-[#383838] rounded mb-[2px]"><div className="h-[76%] rounded bg-[#5a5a5a] border border-[#3e3e3e]" /></div>
    </div>
  </aside>
);

// ---------- Material editor ----------

const Slot = ({ active }) => (
  <button aria-label="Material slot" className={clsx("h-[58px] bg-[#797979] border flex items-center justify-center", active ? "border-white outline-2 outline-white" : "border-[#e8e8e8]")}>
    {active ? (
      <svg width="63" height="56" viewBox="0 0 63 56" className="shrink-0" fill="none" aria-hidden="true">
        <path d="M0 0H7L0 7ZM63 0V7L56 0ZM0 56V49L7 56ZM63 56H56L63 49Z" fill="#fff" />
        <circle cx="31.500" cy="28" r="25.500" fill="url(#ball)" />
        <path d="M29 3C26 9 29 13 27 16C29 19 28 20 28 23L41 38L39 44M7 19C13 23 20 24 28 23M13 44C21 46 31 47 39 43C43 42 46 42 50 41" stroke="#555" />
        <path d="M27 3C45 1 58 16 55 35" stroke="#d8d8d8" strokeWidth="2" />
      </svg>
    ) : (
      <span className="w-[51px] h-[51px] rounded-full bg-[radial-gradient(circle_at_20%_15%,#c3c3c3,#bababa_22%,#9d9d9d_45%,#6c6c6c_68%,#8f8f8f_84%,#a5a5a5)]" />
    )}
  </button>
);

const ScrollBtn = ({ label, icon: Icon }) => (
  <button aria-label={label} className="w-[22px] h-[21px] bg-[#f0f0f0] text-[#b4b4b4] flex items-center justify-center"><Icon size={16} strokeWidth={3} /></button>
);

const SIDE = [
  ["Sample type", <><path d="M2 1H25V21H2Z" stroke="#aaa" strokeDasharray="1 2" /><circle cx="14" cy="11" r="8" fill={G} /></>, false, true],
  ["Backlight", <><circle cx="11" cy="15" r="6" fill={G} stroke={D} /><path d="M20 3C13 3 14 11 17 13V17H21V13C26 10 26 3 20 3Z" fill={T} stroke={D} /></>, true],
  ["Background", <><path d="M5 2H23V20H5Z" fill={T} /><Chk cx={14} cy={11} r={8} /></>],
  ["Sample UV tiling", <path d="M5 2H23V20H5Z" fill={G} />, false, true],
  ["Video color check", <><path d="M6.500 2V15" stroke="#39b54a" strokeWidth="3" /><path d="M11.500 2V15" stroke={A} strokeWidth="3" /><path d="M16.500 2V15" stroke="#00aeef" strokeWidth="3" /><path d="M21.500 2V15" stroke="#ed1c24" strokeWidth="3" /><path d="M5 16H23V20H5Z" fill="#999" /></>],
  ["Make preview", <><path d="M5 2H23V19H5Z" fill={G} stroke={D} /><path d="M8 6H12V15H8ZM12 6H16V15H12ZM16 6H21V15H16Z" stroke={D} /><path d="M6 4H22M6 17H22" stroke={D} strokeDasharray="1 1" /><path d="M18 9V19M13 14H23" stroke={A} strokeWidth="3" /></>, false, true],
  ["Options", <><Chk cx={12} cy={8} r={7} /><circle cx="18" cy="15" r="5.500" fill="#444" /><Gear cx={18} cy={15} r={4} w={2} /></>],
  ["Select by material", <><Chk cx={12} cy={8} r={7} /><g transform="translate(16 9) scale(.7)"><Wand /></g></>],
  ["Material map navigator", <><Chk cx={8} cy={6} r={3.5} /><Chk cx={8} cy={16} r={3.5} /><path d="M14 6H23M14 16H23" stroke={G} strokeWidth="2" /></>],
];

const MTOOLS = [
  ["Get material", <><path d="M4 4H10L12 6H22V20H4Z" fill={T} /><Chk cx={16} cy={14} r={6.5} /></>],
  ["Put to scene", <><circle cx="8" cy="7" r="4" fill="#2e2e2e" /><path d="M13 7H20V13M16 11L20 15L23 11M4 22L11 15H23L17 22ZM8 18H20M12 22L17 15" stroke="#2e2e2e" strokeWidth="1.500" /></>],
  null,
  ["Assign to selection", <><Chk cx={5} cy={7} r={4} /><path d="M11 7H19V12M15 11L19 16L23 11" stroke={T} strokeWidth="3" /><path d="M14 16H23V23H14Z" fill={G} /></>],
  null,
  ["Reset map", <><path d="M8 8H20V23H8ZM6 6H22M11 5V3H17V5" stroke={G} strokeWidth="1.500" /><path d="M11 10V20M14 10V20M17 10V20" stroke={G} /></>],
  null,
  ["Make copy", <><Chk cx={22} cy={6} r={3.5} /><path d="M18 6H9V14M5 11L9 15L13 11" stroke={T} strokeWidth="2.500" /><Chk cx={11} cy={20} r={3.5} /><Chk cx={19} cy={18} r={3.5} /></>],
  null,
  ["Make unique", <g fill="#303030"><circle cx="8" cy="7" r="4" /><circle cx="20" cy="7" r="4" /><circle cx="20" cy="19" r="4" /><path d="M8 12V19H14" stroke="#303030" strokeWidth="2" fill="none" /></g>],
  null,
  ["Put to library", <><path d="M5 4H22V20H5Z" fill={G} /><path d="M9 4H18V10H9ZM9 14H14V18H9Z" stroke={D} strokeWidth="1.500" /><Chk cx={21} cy={19} r={4} /></>],
  null,
  ["Material ID channel", <><path d="M5 3H23V22H5Z" fill={G} /><text x="14" y="18" fontSize="15" fontWeight="700" textAnchor="middle" fill={D}>0</text></>, false, true],
  null,
  ["Show in viewport", <><path d="M5 4H23V22H5Z" fill="#2e2e2e" stroke={G} strokeWidth="1.500" /><circle cx="14" cy="13" r="6.500" fill="#7fd2d2" /></>],
  null,
  ["Show end result", <><path d="M6 3H15M8 4V22H13V4M6 22.500H15" stroke={D} strokeWidth="3" /><path d="M6 3H15M8 4V22H13V4" stroke={G} strokeWidth="1.500" /><path d="M19 22V8M15.500 11L19 6L22.500 11" stroke={T} strokeWidth="2.500" /></>, true],
  ["Go to parent", <><Chk cx={10} cy={8} r={6} /><path d="M24 21H17V12M13 14L17 9L21 14" stroke={T} strokeWidth="2.500" /></>],
  ["Go forward", <><circle cx="10" cy="9" r="7" fill="#303030" /><path d="M12 19H22M18 15L23 19L18 23" stroke="#303030" strokeWidth="2" /></>],
];

const MaterialEditor = () => (
  <div role="dialog" aria-label="Material Editor" className="absolute left-[307px] top-[154px] bottom-[52px] w-[480px] flex flex-col overflow-hidden bg-[#444] border border-[#303030] text-[12px] leading-[15px]">
    <div className="h-9 shrink-0 bg-white text-black flex items-center pl-[9px] text-[15px]">
      <Logo />
      <h2 className="ml-[5px] flex-1">Material Editor - 01 - Default</h2>
      <button aria-label="Minimize" className="w-[58px] flex justify-center"><span className="w-3 h-px bg-black" /></button>
      <button aria-label="Maximize" className="w-[58px] flex justify-center"><span className="w-3 h-3 border border-[#ccc]" /></button>
      <button aria-label="Close" className="w-[62px] flex justify-center"><Svg s={13}><path d="M.5 .5L12.500 12.500M12.500 .5L.5 12.500" stroke="#000" /></Svg></button>
    </div>
    <nav className="h-[27px] shrink-0 bg-white text-black flex gap-4 pl-[7px] text-[14px] leading-[27px]">
      {[["Modes", 2], ["Material", 0], ["Navigation", 0], ["Options", 0], ["Utilities", 0]].map(([t, at]) => (
        <button key={t}><Mnemonic text={t} at={at} /></button>
      ))}
    </nav>
    <div className="flex shrink-0 pt-[3px] pl-[6px]">
      <div>
        <div className="flex">
          <div className="w-[411px] h-[248px] mr-[2px] bg-black p-[3px] grid grid-cols-6 gap-[3px] content-start">
            {range(0, 23).map((i) => (
              <Slot key={i} active={i === 0} />
            ))}
          </div>
          <div className="flex flex-col justify-between">
            <ScrollBtn label="Scroll up" icon={ChevronUp} />
            <ScrollBtn label="Scroll down" icon={ChevronDown} />
          </div>
        </div>
        <div className="flex justify-between w-[413px] mt-px">
          <ScrollBtn label="Scroll left" icon={ChevronLeft} />
          <ScrollBtn label="Scroll right" icon={ChevronRight} />
        </div>
      </div>
      <div className="ml-1 flex flex-col gap-1 pt-px">
        {SIDE.map(([n, icon, active, corner]) => (
          <button key={n} aria-label={n} className={clsx("relative w-7 h-[26px] flex items-center justify-center rounded", active && "bg-[#5b87c0]")}>
            <Svg s={28} vb="0 -3 28 28">{icon}</Svg>
            {corner && <Corner />}
          </button>
        ))}
      </div>
    </div>
    <div className="flex items-center shrink-0 h-[26px] mt-2 pl-2">
      {MTOOLS.map((t, i) =>
        t ? (
          <button key={i} aria-label={t[0]} className={clsx("relative w-7 h-[26px] rounded flex items-center justify-center", t[2] && "bg-[#5b87c0]")}>
            <Svg s={26} vb="1 0 26 26">{t[1]}</Svg>
            {t[3] && <Corner />}
          </button>
        ) : (
          <span key={i} className="w-[10px] flex justify-center"><span className="w-px h-5 bg-[#1a1a1a]" /></span>
        )
      )}
    </div>
    <div className="flex items-center shrink-0 mt-2 pl-[6px]">
      <span className="w-[102px] pt-[10px]">Diffuse Color:</span>
      <Svg s={20} className="mr-[10px]"><path d="M1 19L3 14L12 5L15 8L6 17Z" stroke={G} strokeWidth="1.500" /><path d="M10 5L15 10M13 6L16 2L18 4L15 8" stroke={G} strokeWidth="3" /></Svg>
      <Select label="Map name" value="Map #1" className="w-[201px] h-[23px] mr-[5px]" />
      <Btn className="w-[117px] h-[23px]">Bitmap</Btn>
    </div>
    <div className="flex-1 min-h-0 mt-2 px-[2px] pb-1 flex gap-1">
      <div className="w-[463px] shrink-0 flex flex-col gap-1 overflow-hidden">
        <Rollout title="Coordinates" className="h-[243px]">
          <div className="flex items-center mt-3 pl-[21px]">
            <Radio name="coords" checked className="w-20">Texture</Radio>
            <Radio name="coords" className="w-[87px]">Environ</Radio>
            <span className="w-[65px]">Mapping:</span>
            <Select label="Mapping" value="Explicit Map Channel" split className="w-[185px] h-[23px]" />
          </div>
          <div className="flex items-center mt-[6px] pl-[21px]">
            <Check checked disabled className="flex-1">Show Map on Back</Check>
            <span className="mr-[5px]">Map Channel:</span>
            <Spin label="Map Channel" value="1" />
            <span className="w-8" />
          </div>
          <Check className="mt-1 pl-[21px]">Use Real-World Scale</Check>
          <div className="grid grid-cols-[79px_78px_16px_78px_11px_32px_32px_25px_78px] grid-rows-[8px] gap-y-1 items-center justify-items-center mt-[7px]">
            <span /><span className="pr-4">Offset</span><span /><span className="pr-5">Tiling</span><span /><span className="pr-2">Mirror</span><span className="pr-1">Tile</span><span /><span className="pr-5">Angle</span>
            <span className="justify-self-end pr-[3px]">U:</span><Spin label="U offset" value="0.0" /><span /><Spin label="U tiling" value="1.0" /><span /><Check label="Mirror U" /><Check label="Tile U" checked /><span className="justify-self-end pr-[2px]">U:</span><Spin label="U angle" value="0.0" />
            <span className="justify-self-end pr-[3px]">V:</span><Spin label="V offset" value="0.0" /><span /><Spin label="V tiling" value="1.0" /><span /><Check label="Mirror V" /><Check label="Tile V" checked /><span className="justify-self-end pr-[2px]">V:</span><Spin label="V angle" value="0.0" />
            <div className="col-span-7 justify-self-start pl-[41px] pt-2 flex">
              <Radio name="uvw" checked className="w-[52px]">UV</Radio>
              <Radio name="uvw" className="w-[58px]">VW</Radio>
              <Radio name="uvw">WU</Radio>
            </div>
            <span className="self-start pt-[2px] justify-self-end pr-[2px]">W:</span><div className="self-start"><Spin label="W angle" value="0.0" /></div>
          </div>
          <div className="flex items-center mt-2 pl-[23px]">
            <span className="w-[38px]">Blur:</span><Spin label="Blur" value="1.0" />
            <span className="w-[76px] ml-3">Blur offset:</span><Spin label="Blur offset" value="0.0" />
            <Btn className="ml-[46px] w-[78px] h-[23px]">Rotate</Btn>
          </div>
        </Rollout>
        <Rollout title="Noise" closed />
        <Rollout title="Bitmap Parameters" className="flex-1">
          <div className="flex items-center pl-[27px] pt-[13px]">
            <span className="w-12">Bitmap:</span>
            <Btn className="w-[359px] h-[23px]">C:\Users\User\OneDrive\바탕 화면\평면도.png</Btn>
          </div>
          <div className="flex mt-2 pl-[23px]">
            <div className="w-[170px] mr-[13px]">
              <Btn className="w-[81px] h-[23px] mt-px">Reload</Btn>
              <fieldset className="mt-5 h-[90px] ml-[2px] rounded border border-[#3c3c3c] pl-5 pt-[6px] flex flex-col gap-[3px]">
                <legend className="-ml-4 px-1">Filtering</legend>
                <Radio name="filtering" checked>Pyramidal</Radio>
                <Radio name="filtering">Summed Area</Radio>
                <Radio name="filtering">None</Radio>
              </fieldset>
            </div>
            <fieldset className="w-[230px] h-[150px] mt-px rounded border border-[#3c3c3c] pl-[13px]">
              <legend className="-ml-2 px-1">Cropping/Placement</legend>
              <div className="flex items-center pl-[19px] pt-[15px]">
                <Check className="w-[85px] pt-[2px]">Apply</Check>
                <Btn className="w-[97px] h-[23px]">View Image</Btn>
              </div>
              <div className="flex mt-[10px] pl-8">
                <Radio name="crop" checked className="w-[70px]">Crop</Radio>
                <Radio name="crop">Place</Radio>
              </div>
              <div className="grid grid-cols-[16px_72px_42px_72px] mt-[10px] gap-y-1 items-center">
                <span>U:</span><Spin label="Crop U" value="0.0" className="w-full" /><span className="justify-self-end pr-1">W:</span><Spin label="Crop W" value="1.0" className="w-full" />
                <span>V:</span><Spin label="Crop V" value="0.0" className="w-full" /><span className="justify-self-end pr-1">H:</span><Spin label="Crop H" value="1.0" className="w-full" />
              </div>
            </fieldset>
          </div>
        </Rollout>
      </div>
      <div className="w-[7px] rounded bg-[#383838]"><div className="h-2/3 rounded bg-[#565656] border border-[#3c3c3c]" /></div>
    </div>
  </div>
);

// ---------- Time line and status ----------

const TrackBar = () => (
  <div className="shrink-0 flex">
    <DotsV className="ml-[2px] mt-2 h-[70px]" />
    <div className="flex-1 min-w-0 ml-[6px]">
      <div className="h-[31px] pt-[6px] flex items-start gap-[2px] text-[12px]">
        <Btn className="w-[18px] h-[21px]">&lt;</Btn>
        <Btn className="w-[154px] h-[21px]">0 / 100</Btn>
        <Btn className="w-[18px] h-[21px]">&gt;</Btn>
      </div>
      <div className="h-[48px] flex border-t-2 border-[#101010]">
        <span className="w-[60px] flex justify-center pt-[6px] pr-2"><Svg s={20}><path d="M0 4H4M0 7.500H4M0 11H4M0 14.500H4" stroke={G} /><path d="M6 12C8 2 10 3 12 9S16 17 18 7" stroke={T} strokeWidth="1.500" /></Svg></span>
        <div className="flex-1 min-w-0 h-11 bg-[#292929] border-b border-[#3a3a3a] text-[12px] text-[#b4b4b4]">
          <div className="flex h-[30px] border-b border-[#3d3d3d]">
            {range(0, 100).map((f) => (
              <div key={f} className={clsx("flex-1 min-w-0 flex flex-col items-center", f === 0 && "relative")}>
                {f === 0 && <span className="absolute inset-y-0 w-[10px] bg-[#857b1d]" />}
                <span className={clsx("w-px bg-[#6e6e6e]", f % 5 ? "h-[13px]" : "h-[14px]")} />
                {f % 5 === 0 && <span className={clsx("relative leading-[14px]", f === 0 && "text-[#d6cc3c]")}>{f}</span>}
              </div>
            ))}
          </div>
        </div>
        <span className="w-[61px] bg-[#444]" />
      </div>
    </div>
  </div>
);

const Key = ({ label, corner, children }) => (
  <button aria-label={label} className="relative w-[29px] h-7 flex items-center justify-center"><Svg s={20}>{children}</Svg>{corner && <Corner />}</button>
);

const Coord = ({ axis, value }) => (
  <label className="flex items-center gap-[6px]">
    <span className="w-2">{axis}:</span>
    <input defaultValue={value} className="w-[73px] h-[22px] px-[2px] bg-[#5a5a5a] border border-[#4a4a4a] text-[#8c8c8c] outline-none" />
  </label>
);

const StatusBar = () => (
  <footer className="h-[67px] shrink-0 flex items-start pt-[3px] text-[12px] leading-[15px]">
    <div className="w-[122px] ml-1 mr-1 flex flex-col gap-[2px] shrink-0">
      <div className="h-7 bg-[#dcc4c4] border-2 border-[#eee] border-t-[#888] border-l-[#aaa]" />
      <input aria-label="MAXScript listener" defaultValue="MAXScript Mini" className="w-full h-[29px] px-[3px] pb-1 bg-white border-2 border-[#eee] border-t-[#888] border-l-[#aaa] text-[#7c7c7c] text-[13px] font-['Liberation_Mono',monospace] outline-none" />
    </div>
    <span className="w-[3px] h-[62px] bg-[#1f1f1f] mr-1" />
    <div className="w-[674px] shrink-0 pt-[9px]">
      <p>1 Object Selected</p>
      <p className="mt-4">Click and drag to begin creation process</p>
    </div>
    <div className="w-[545px] shrink-0">
      <div className="flex items-center h-8">
        <Svg s={20} className="mr-[14px] ml-1"><path d="M6 5H14V15H6Z" fill={T} /><path d="M1 5V1H5M15 1H19V5M19 15V19H15M5 19H1V15" stroke={G} strokeWidth="1.500" /></Svg>
        <Svg s={18} className="mr-[15px]"><path d="M4 8H14V17H4ZM6 8V4C6 0 12 0 12 4V8M9 11V14" stroke="#232323" strokeWidth="1.500" /></Svg>
        <Svg s={18} className="mr-[10px]"><path d="M0 0H18V18H0Z" fill={G} /><path d="M9 2L12 5H6ZM9 16L6 13H12ZM2 9L5 6V12ZM16 9L13 12V6Z" fill={D} /><circle cx="9" cy="9" r="3.500" stroke={D} strokeWidth="1.500" /></Svg>
        <div className="flex gap-4">
          <Coord axis="X" value="-196.8" />
          <Coord axis="Y" value="259.84" />
          <Coord axis="Z" value="0.0" />
        </div>
        <span className="ml-[18px]">Grid = 10.0</span>
      </div>
      <div className="flex items-center h-8 pl-[232px]">
        <span className="w-px h-5 bg-[#222] mr-[7px]" />
        <Btn className="w-6 h-6 flex items-center justify-center"><Svg s={16}><path d="M2 2L8 0L14 2V8C14 12 10 15 8 16C6 15 2 12 2 8Z" fill={G} /><path d="M8 2V8H14C14 11 10 14 8 15V8H3V3Z" fill="#555" /></Svg></Btn>
        <span className="ml-[7px]">Enabled:</span>
        <span className="w-3 h-3 mx-[7px] rounded-full bg-[#4fe04f]" />
        <Btn className="w-6 h-6 flex items-center justify-center"><span className="w-4 h-4 rounded-full bg-[#e8e8e8] text-[#333] font-bold leading-4">1</span></Btn>
        <span className="w-px h-5 bg-[#222] ml-[7px] mr-[9px]" />
        <Svg s={16}><path d="M8 1L14 4.500V11.500L8 15L2 11.500V4.500ZM2 4.500L8 8L14 4.500M8 8V15" stroke={G} strokeWidth="1.200" /></Svg>
        <span className="ml-[11px] text-[#cfcfcf]">Add Time Tag</span>
      </div>
    </div>
    <div className="shrink-0 w-[165px]">
      <div className="flex h-8 items-center">
        <Key label="Go to start"><path d="M2 3V17" stroke={G} strokeWidth="2" /><path d="M11 3V17L4 10ZM19 3V17L12 10Z" fill={G} /></Key>
        <Key label="Previous frame"><path d="M10 3V17L2 10ZM12 3H14.500V17H12ZM16 3H18.500V17H16Z" fill={G} /></Key>
        <Key label="Play" corner><path d="M4 1L18 10L4 19Z" fill={G} /></Key>
        <Key label="Next frame"><path d="M10 3V17L18 10ZM2 3H4.500V17H2ZM6 3H8.500V17H6Z" fill={G} /></Key>
        <Key label="Go to end"><path d="M18 3V17" stroke={G} strokeWidth="2" /><path d="M1 3V17L8 10ZM9 3V17L16 10Z" fill={G} /></Key>
      </div>
      <div className="flex items-center">
        <Svg s={20} className="ml-1 mr-1"><path d="M8 4V16L2 10ZM12 4V16L18 10Z" fill={G} /></Svg>
        <Spin label="Current frame" value="0" className="w-[88px]" />
        <Svg s={22} className="ml-[6px]"><circle cx="8" cy="9" r="7" fill={G} /><path d="M8 4V9H11" stroke={D} /><circle cx="14" cy="14" r="7" fill="#444" /><Gear cx={14} cy={14} r={5} w={2} /></Svg>
      </div>
    </div>
    <Btn className="w-[54px] h-[55px] mt-1 mr-[3px] flex items-center justify-center">
      <Svg s={42}><path d="M19 5V35M4 20H34" stroke={D} strokeWidth="8" /><path d="M19 5V35M4 20H34" stroke="#e0e0e0" strokeWidth="6" /><path d="M36 24L27 34M34 27L37 30" stroke={T} strokeWidth="3" /><circle cx="25" cy="36" r="3" stroke={T} strokeWidth="3" /></Svg>
    </Btn>
    <div className="mt-[3px] mr-1 flex flex-col gap-[2px]">
      <Btn className="w-[59px] h-[26px]">Auto</Btn>
      <Btn className="w-[59px] h-[26px]">Set K.</Btn>
    </div>
    <div className="mt-[3px] w-[144px]">
      <Select label="Key set" value="Selected" className="w-full h-[22px]" />
      <div className="flex mt-[6px] items-center">
        <Svg s={26} className="mr-[6px]"><path d="M2 22C8 22 8 6 12 6S16 22 22 22M4 6H20" stroke={T} strokeWidth="2" /><path d="M10 3H15V8H10ZM2 4.500H5V7.500H2ZM20 4.500H23V7.500H20Z" fill={D} stroke={G} /></Svg>
        <Btn className="flex-1 h-[26px]">Filters...</Btn>
      </div>
    </div>
    <div className="flex-1" />
    <div className="grid grid-cols-4 pr-3 pt-px">
      <Key label="Zoom"><circle cx="12" cy="7" r="6" stroke={G} strokeWidth="2" /><path d="M8 11L2 19" stroke={G} strokeWidth="3" /></Key>
      <Key label="Zoom all"><path d="M9 0H14V6H9ZM15 0H20V6H15ZM15 7H20V13H15Z" fill={T} /><circle cx="9" cy="10" r="5" stroke={G} strokeWidth="2" /><path d="M6 14L2 19" stroke={G} strokeWidth="3" /></Key>
      <Key label="Zoom extents" corner><path d="M10 3L17 6V14L10 18L3 14V6Z" fill={T} /><path d="M3 6L10 9L17 6M10 9V18" stroke={D} /><path d="M0 4V0H4M16 0H20V4M4 20H0V16" stroke={G} /></Key>
      <Key label="Zoom extents all" corner><path d="M14 1L18 4V11L14 13L9 11V4Z" fill={T} /><path d="M5 7L8 10L5 13L2 10ZM5 14L8 17L5 20L2 17ZM12 13L15 16L12 19L9 16Z" fill={G} /></Key>
      <Key label="Region zoom"><path d="M2 2H18V15H2Z" stroke={G} strokeDasharray="2 2" /><circle cx="11" cy="9" r="4.500" stroke={T} strokeWidth="2" /><path d="M8 13L3 19" stroke={T} strokeWidth="2.500" /></Key>
      <Key label="Pan" corner><path d="M5 19L1 11L3 10L6 13V4H8V10V2H10.500V10V3H13V11L14 6H16V15L13 19Z" fill={G} /></Key>
      <Key label="Orbit" corner><circle cx="9" cy="9" r="7" fill={G} /><path d="M9 2A7 7 0 0 0 2 9H9Z" fill={T} /><path d="M2 18C12 18 18 10 17 2" stroke={D} strokeWidth="4" /><path d="M2 18C12 18 18 10 17 2" stroke={G} strokeWidth="2" /></Key>
      <Key label="Maximize viewport"><path d="M1 1H19V19H1Z" fill={G} /><path d="M9 3H17V11M17 3L8 12" stroke={D} strokeWidth="2" /><path d="M2 12H8V18H2Z" fill={D} /></Key>
    </div>
  </footer>
);

// ---------- Windows taskbar ----------

const APPS = [
  ["Edge", "", <><circle cx="16" cy="16" r="15" fill="#0c74d0" /><path d="M2 12C6 -2 29 -2 31 14C31 21 22 22 20 18C21 11 10 8 2 12Z" fill="#3ad0a8" /><path d="M20 18C19 20 21 22 25 22C29 22 31 19 31 16C31 21 30 24 27 27L14 22C11 18 13 13 17 14C19 15 20 16 20 18Z" fill="#171923" /><path d="M12 14C8 24 18 30 27 26C16 35 2 28 1 17C5 11 9 11 12 14Z" fill="#1557b0" /><path d="M2 12C6 -2 20 -1 22 2C12 1 5 6 2 12Z" fill="#28b4e8" /></>],
  ["Chrome", "border-b-[3px] border-[#76b9ed]", <><circle cx="14" cy="15" r="14" fill="#2ca14a" /><path d="M1 9A14 14 0 0 1 27 9L14 10L9 18Z" fill="#e33b2e" /><path d="M27 9H14L20 19L14 29A14 14 0 0 0 27 9Z" fill="#fcc934" /><circle cx="14" cy="15" r="6" fill="#3f82f0" stroke="#fff" strokeWidth="2" /><circle cx="22" cy="22" r="10" fill="#7b1fa2" /><circle cx="22" cy="19" r="3.500" fill="#e0c0ec" /><path d="M16 28C16 23 28 23 28 28Z" fill="#e0c0ec" /></>],
  ["File Explorer", "", <><path d="M2 5H12L14 8H30V28H2Z" fill="#ffd25c" /><path d="M2 5H12L14 8H2Z" fill="#e39b12" /><path d="M7 28V19H25V28H20V23H12V28Z" fill="#3f97e0" /></>],
  ["Mail", "", <><path d="M1 12L16 2L31 12V30H1Z" fill="#1a6fc0" /><path d="M3 12H29L16 22Z" fill="#f2f2f2" /><path d="M1 12L16 22L31 12V30H1Z" fill="#28a8ea" /><path d="M16 22L31 30H1Z" fill="#1b93dc" /></>],
  ["Search app", "", <><circle cx="16" cy="16" r="15" fill="#1b4fd0" /><path d="M21 10A8 8 0 1 0 18 23M15 12H24M15 16H22M15 20H19L23 25" stroke="#fff" strokeWidth="2" /></>],
  ["Share app", "", <><circle cx="16" cy="16" r="15" fill="#6a4fd8" /><circle cx="16" cy="16" r="8" stroke="#c9b8ff" strokeWidth="2" /><path d="M10 16H21M17 12L21 16L17 20" stroke="#fff" strokeWidth="2" /></>],
  ["Internet Explorer", "", <><path d="M26 22A10 10 0 1 1 26 17H8" stroke="#45bdf2" strokeWidth="5" /><path d="M3 29C-2 21 20 0 28 3C31 5 29 10 28 12" stroke="#f5c62c" strokeWidth="2.500" /></>],
  ["Office", "", <><path d="M6 7L20 1L27 4V28L20 31L6 26L19 27V7L12 10V22L6 25Z" fill="#e03a10" /><path d="M20 1L27 4V28L20 31Z" fill="#b52a0a" /></>],
  ["Design", "", <><circle cx="16" cy="16" r="14" fill="#f0f2f4" /><path d="M10 8H22V24H10Z" rx="2" fill="#2f8be0" /><path d="M17 10L11 24M17 10L22 21" stroke="#14406e" strokeWidth="2" /><circle cx="17" cy="9" r="2.500" fill="#3ddc84" /></>],
  ["Calendar", "", <><path d="M3 6H29V30H3Z" fill="#1590e0" /><path d="M3 6H29V12H3Z" fill="#0c62ad" /><path d="M9 2V9M23 2V9" stroke="#4cc2f5" strokeWidth="2.500" /><path d="M8 16H25M8 20.500H25M8 25H20" stroke="#fff" strokeWidth="3" strokeDasharray="3 2" /></>],
  ["KakaoTalk", "bg-[#a45a28] border-b-[3px] border-[#ff7a14]", <><path d="M1 1H31V31H1Z" fill="#fbe300" /><path d="M16 6C2 6 1 22 12 23L14 28L20 23C31 21 30 6 16 6Z" fill="#3b1e1e" /><text x="16" y="18" fontSize="8" fontWeight="700" textAnchor="middle" fill="#fbe300">TALK</text></>],
  ["Sticky Notes", "border-b-[3px] border-[#76b9ed]", <><path d="M3 3H29V18L19 29H3Z" fill="#ffd60a" /><path d="M29 18V29H19Z" fill="#585858" /><path d="M19 18H29L19 29Z" fill="#333" /></>],
  ["3ds Max", "bg-[#4a4f66] border-b-[3px] border-[#76b9ed]", <><path d="M1 1H31V31H1Z" fill="#e2f0f0" /><text x="15" y="21" fontSize="22" fontWeight="900" textAnchor="middle" fill="#0d9199">3</text><text x="22" y="30" fontSize="6" fontWeight="700" textAnchor="middle" fill="#0d9199">MAX</text></>],
];

const Tray = ({ label, className = "", children }) => (
  <button aria-label={label} className={clsx("w-[30px] flex items-center justify-center", className)}>{children}</button>
);

const Taskbar = () => (
  <div className="h-[50px] shrink-0 flex items-stretch bg-[linear-gradient(90deg,#151722_0%,#171923_36%,#1f3a46_46%,#16304a_56%,#14263f_62%,#1a2236_68%,#10244a_80%,#15182e_92%,#171b33_100%)]">
    <button aria-label="Start" className="w-[60px] flex items-center justify-center"><Svg s={20}><path d="M0 3L9 1.500V9.500H0ZM10 1.300L20 0V9.500H10ZM0 10.500H9V18.500L0 17ZM10 10.500H20V20L10 18.700Z" fill="#fff" /></Svg></button>
    <div className="w-[430px] flex items-center bg-[#333] border border-[#555] border-b-0 overflow-hidden">
      <Search size={22} strokeWidth={1.5} className="ml-[14px] -scale-x-100 shrink-0" />
      <input aria-label="검색" defaultValue="검색하려면 여기에 입력하십시" className="ml-[14px] w-[272px] bg-transparent text-[21px] text-[#d6d6d6] outline-none" />
      <svg width="102" height="48" viewBox="0 0 102 48" className="ml-auto shrink-0" fill="none" aria-hidden="true">
        <path d="M0 48C14 22 60 0 102 24V48Z" fill="#6cc0f8" />
        <path d="M20 30C50 14 80 20 102 20V42C80 28 50 34 20 30Z" fill="#2c62d8" />
        {range(0, 10).map((i) => (
          <g key={i}>
            <path d={`M${48 + i * 5} ${18 - (i % 4) * 4}V${30}`} stroke={i % 2 ? "#a5764c" : "#c49a74"} strokeWidth="5" />
            <ellipse cx={48 + i * 5} cy={18 - (i % 4) * 4} rx="2.500" ry="1.500" fill="#ead0b4" />
          </g>
        ))}
        {range(0, 7).map((i) => (
          <g key={i}>
            <path d={`M${16 + i * 12} ${40 - (i % 3) * 4}V48`} stroke={i % 2 ? "#b98554" : "#9c6d42"} strokeWidth="12" />
            <ellipse cx={16 + i * 12} cy={40 - (i % 3) * 4} rx="6" ry="2.500" fill="#dcb68c" />
          </g>
        ))}
        <path d="M10 18C4 18 5 10 11 11C12 4 22 4 23 9C31 7 33 18 26 18Z" fill="#c8dcea" />
        <path d="M36 3L39 5L43 2L42 6L45 10L40 9L36 11L38 7Z" fill="#e07af0" />
        <circle cx="54" cy="9" r="2.500" fill="#ffae1a" /><circle cx="6" cy="30" r="2.500" fill="#43c46a" />
      </svg>
    </div>
    <button aria-label="Task View" className="w-[60px] flex items-center justify-center"><Svg s={22}><path d="M1 6H14V16H1ZM1 1V3H14V1M1 21V19H14V21M19 1V6M19 11V21" stroke="#fff" strokeWidth="1.500" /><path d="M17.500 7H20.500V10H17.500Z" fill="#fff" /></Svg></button>
    <div className="flex gap-px pl-[3px]">
      {APPS.map(([n, cls, icon]) => (
        <button key={n} aria-label={n} className={clsx("w-[61px] flex items-center justify-center", cls)}><Svg s={30} vb="0 0 32 32">{icon}</Svg></button>
      ))}
    </div>
    <div className="flex-1" />
    <button className="flex items-center gap-3 mr-[14px] text-[16px]">
      <Svg s={30}><path d="M6 16C0 14 2 7 8 8C10 1 20 1 21 7C29 6 30 15 24 16Z" fill="#d4dde8" /><path d="M10 12L6 21A4 4 0 0 0 13 21ZM20 12L16 21A4 4 0 0 0 23 21ZM15 18L12 25A3.500 3.500 0 0 0 18 25Z" fill="#3ba0f0" stroke="#e0e8f0" strokeWidth=".8" /><circle cx="26" cy="25" r="4" fill="#e81123" /></Svg>
      24°C
    </button>
    <Tray label="Hidden icons"><ChevronUp size={22} strokeWidth={1.5} /></Tray>
    <Tray label="Volume"><Volume2 size={20} strokeWidth={1.2} /></Tray>
    <Tray label="Camera"><Svg s={18}><path d="M2 5H11V14H2ZM11 8L15 6V13L11 11M3 2C6 0 10 0 13 2M3 17C6 18 10 18 13 17" stroke="#fff" /></Svg></Tray>
    <Tray label="OneDrive"><Svg s={22}><path d="M5 15C-1 14 1 8 5 8C7 2 15 3 16 8C22 8 22 15 18 15Z" fill="#c0c4cc" /><circle cx="16" cy="16" r="5.500" fill="#e02020" /><path d="M14 14L18 18M18 14L14 18" stroke="#fff" strokeWidth="1.500" /></Svg></Tray>
    <Tray label="Battery"><Svg s={20}><path d="M1 5H17V15H1ZM17 8H19V12H17" stroke="#fff" strokeWidth="1.500" /><path d="M3 7H9V13H3Z" fill="#fff" /></Svg></Tray>
    <Tray label="Network"><Wifi size={18} strokeWidth={1.5} className="-rotate-45" /></Tray>
    <Tray label="Input mode" className="text-[22px]">A</Tray>
    <button className="w-[92px] text-[14px] leading-[23px] text-center pt-px">
      <span className="block">오후 3:08</span>
      <span className="block">2022-07-13</span>
    </button>
    <button aria-label="Notifications" className="relative w-[64px] flex items-center pl-[17px]">
      <Svg s={24}><path d="M1 2H21V17H12L7 22V17H1Z" fill="#fff" /><path d="M4 6H18M4 9.500H18M4 13H12" stroke="#222a40" /></Svg>
      <span className="absolute left-[26px] top-[26px] w-[18px] h-[18px] rounded-full bg-[#30343f] border border-[#888] text-[13px] leading-4 font-bold">5</span>
    </button>
  </div>
);

export default function App() {
  return (
    <div className="relative h-screen min-w-[1600px] flex flex-col overflow-hidden bg-[#444] text-[#f2f2f2] font-['Noto_Sans','Noto_Sans_CJK_KR',sans-serif]">
      <svg width="0" height="0" className="absolute" aria-hidden="true">
        <defs>
          <pattern id="chk" width="6" height="6" patternUnits="userSpaceOnUse">
            <path d="M0 0H6V6H0Z" fill="#e0e0e0" />
            <path d="M0 0H3V3H0ZM3 3H6V6H3Z" fill="#2a2a2a" />
          </pattern>
          <radialGradient id="ball" cx=".2" cy=".15" r="1.050">
            <stop offset="0" stopColor="#b8b8b8" />
            <stop offset=".5" stopColor="#929292" />
            <stop offset=".75" stopColor="#666" />
            <stop offset="1" stopColor="#8a8a8a" />
          </radialGradient>
        </defs>
      </svg>
      <TitleBar />
      <MenuBar />
      <MainToolbar />
      <ProjectBar />
      <Ribbon />
      <div className="flex-1 min-h-0 flex pt-[6px]">
        <div className="w-[50px] shrink-0 flex flex-col">
          <DotsH className="ml-[2px] mr-[3px] mt-[2px] mb-[6px]" />
          <div className="flex-1 flex flex-col justify-end bg-[#303030] border-r border-black pb-[3px]">
            <button aria-label="Expand" className="ml-3 mb-[14px] w-[25px] h-6 rounded border border-[#222] bg-[#484848] flex items-center justify-center"><Tri className="-rotate-90 text-[#e0e0e0]" /></button>
            <button aria-label="Viewport layout" className="ml-1 h-[54px] pl-1 pr-[2px] rounded-l bg-linear-to-b from-[#55708f] to-[#3f7fd8] flex items-center"><span className="flex-1 h-[35px] rounded-sm border-2 border-[#26303c] bg-[#5c6670]" /></button>
          </div>
        </div>
        <SceneExplorer />
        <Viewport />
        <CommandPanel />
      </div>
      <TrackBar />
      <StatusBar />
      <Taskbar />
      <MaterialEditor />
    </div>
  );
}
